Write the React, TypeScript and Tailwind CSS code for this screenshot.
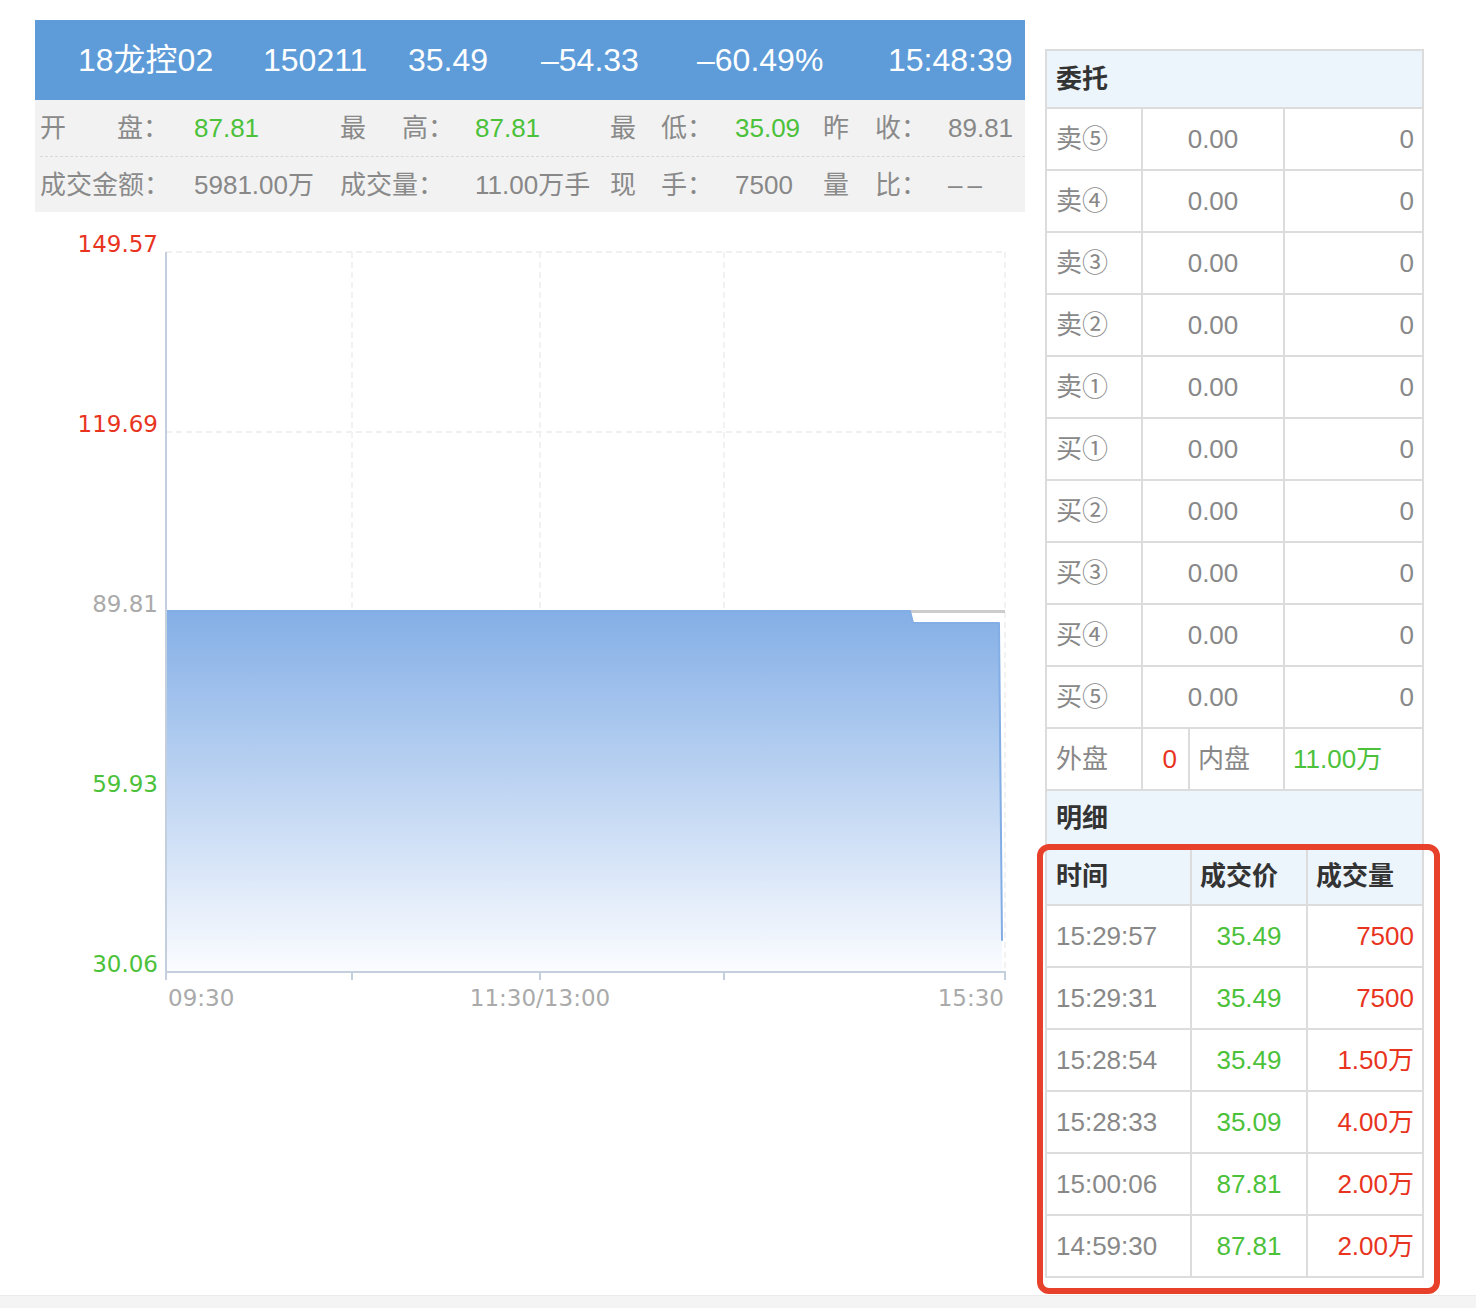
const head = [
  { text: '18龙控02', w: 'w-[185px]' },
  { text: '150211', w: 'w-[145px]' },
  { text: '35.49', w: 'w-[133px]' },
  { text: '–54.33', w: 'w-[156px]' },
  { text: '–60.49%', w: 'w-[191px]' },
  { text: '15:48:39', w: '' },
]

const book = [
  { name: '卖⑤', price: '0.00', vol: '0' },
  { name: '卖④', price: '0.00', vol: '0' },
  { name: '卖③', price: '0.00', vol: '0' },
  { name: '卖②', price: '0.00', vol: '0' },
  { name: '卖①', price: '0.00', vol: '0' },
  { name: '买①', price: '0.00', vol: '0' },
  { name: '买②', price: '0.00', vol: '0' },
  { name: '买③', price: '0.00', vol: '0' },
  { name: '买④', price: '0.00', vol: '0' },
  { name: '买⑤', price: '0.00', vol: '0' },
]

const trades = [
  { time: '15:29:57', price: '35.49', vol: '7500' },
  { time: '15:29:31', price: '35.49', vol: '7500' },
  { time: '15:28:54', price: '35.49', vol: '1.50万' },
  { time: '15:28:33', price: '35.09', vol: '4.00万' },
  { time: '15:00:06', price: '87.81', vol: '2.00万' },
  { time: '14:59:30', price: '87.81', vol: '2.00万' },
]

// two-part label spread across a fixed width, e.g. "开    盘："
function Label({ a, b, w }: { a: string; b: string; w: string }) {
  return (
    <div className={`${w} flex justify-between text-[#8a8a8a]`}>
      <span>{a}</span>
      <span>{b}</span>
    </div>
  )
}

function Chart() {
  const gridY = [252, 432, 612, 792]
  const gridX = [352, 540, 724, 1005]
  const ticks = [166, 352, 540, 724, 1005]
  const yLabels = [
    { y: 252, t: '149.57', c: '#e8341e' },
    { y: 432, t: '119.69', c: '#e8341e' },
    { y: 612, t: '89.81', c: '#aaaaaa' },
    { y: 792, t: '59.93', c: '#4cc13a' },
    { y: 972, t: '30.06', c: '#4cc13a' },
  ]
  return (
    <svg width={990} height={818} viewBox="35 212 990 818" className="block font-['DejaVu_Sans',sans-serif]">
      <defs>
        <linearGradient id="area" x1="0" y1="611" x2="0" y2="972" gradientUnits="userSpaceOnUse">
          <stop offset="0" stopColor="#84afe6" />
          <stop offset="1" stopColor="#fbfcff" />
        </linearGradient>
      </defs>
      {gridY.map((y) => (
        <line key={y} x1={166} x2={1005} y1={y} y2={y} stroke="#ececec" strokeWidth={1.5} strokeDasharray="6 4" />
      ))}
      {gridX.map((x) => (
        <line key={x} x1={x} x2={x} y1={252} y2={972} stroke="#eeeeee" strokeWidth={1.5} strokeDasharray="6 4" />
      ))}
      <line x1={166} x2={1005} y1={611.5} y2={611.5} stroke="#cccccc" strokeWidth={3} />
      <polygon points="167,611 910,611 913,623 999,623 1002,940 1002,972 167,972" fill="url(#area)" />
      <polyline
        points="167,611 910,611 913,623 999,623 1002,940"
        fill="none"
        stroke="#82ade5"
        strokeWidth={2}
        strokeLinecap="round"
        strokeLinejoin="round"
      />
      <line x1={166} x2={166} y1={252} y2={980} stroke="#c4cfdd" strokeWidth={2} />
      <line x1={166} x2={1006} y1={972} y2={972} stroke="#c4cfdd" strokeWidth={2} />
      {ticks.map((x) => (
        <line key={x} x1={x} x2={x} y1={972} y2={980} stroke="#c4cfdd" strokeWidth={2} />
      ))}
      {yLabels.map((l) => (
        <text key={l.t} x={158} y={l.y} textAnchor="end" fontSize={23} fill={l.c}>
          {l.t}
        </text>
      ))}
      <text x={168} y={1006} fontSize={23} fill="#aaaaaa">09:30</text>
      <text x={540} y={1006} fontSize={23} fill="#aaaaaa" textAnchor="middle">11:30/13:00</text>
      <text x={1004} y={1006} fontSize={23} fill="#aaaaaa" textAnchor="end">15:30</text>
    </svg>
  )
}

export default function App() {
  return (
    <div className="relative w-[1476px] h-[1308px] bg-white flex flex-col font-['Liberation_Sans','Noto_Sans_CJK_SC',sans-serif]">
      <div className="h-[1295px] flex gap-[20px] pl-[35px] pt-[20px]">
        {/* ── Left – quote + chart ─────────────────────── */}
        <div className="w-[990px]">
          <div className="h-[80px] bg-[#5d9bd9] flex items-center pl-[43px] text-white text-[32px]">
            {head.map((h) => (
              <span key={h.text} className={`${h.w} shrink-0`}>{h.text}</span>
            ))}
          </div>

          <div className="bg-[#f2f2f2] pl-[5px] text-[26px] text-[#888888]">
            <div className="h-[57px] pt-px flex items-center border-b border-dashed border-[#d9d9d9]">
              <div className="w-[154px]"><Label a="开" b="盘：" w="w-[129px]" /></div>
              <div className="w-[146px] text-[#4cc13a]">87.81</div>
              <div className="w-[135px]"><Label a="最" b="高：" w="w-[114px]" /></div>
              <div className="w-[135px] text-[#4cc13a]">87.81</div>
              <div className="w-[125px]"><Label a="最" b="低：" w="w-[103px]" /></div>
              <div className="w-[88px] text-[#4cc13a]">35.09</div>
              <div className="w-[125px]"><Label a="昨" b="收：" w="w-[104px]" /></div>
              <div>89.81</div>
            </div>
            <div className="h-[55px] pt-[2px] flex items-center">
              <div className="w-[154px] text-[#8a8a8a]">成交金额：</div>
              <div className="w-[146px]">5981.00万</div>
              <div className="w-[135px] text-[#8a8a8a]">成交量：</div>
              <div className="w-[135px]">11.00万手</div>
              <div className="w-[125px]"><Label a="现" b="手：" w="w-[103px]" /></div>
              <div className="w-[88px]">7500</div>
              <div className="w-[125px]"><Label a="量" b="比：" w="w-[104px]" /></div>
              <div className="tracking-[5px]">––</div>
            </div>
          </div>

          <Chart />
        </div>

        {/* ── Right – order book + trades ─────────────── */}
        <div className="w-[379px] mt-[29px] self-start border-2 border-b-0 border-[#dcdcdc] text-[26px] text-[#888888]">
          <div className="h-[58px] bg-[#ecf4fc] border-b-2 border-[#dcdcdc] flex items-center pl-[9px] font-bold text-[#333333]">
            委托
          </div>
          {book.map((r) => (
            <div key={r.name} className="h-[62px] flex border-b-2 border-[#dcdcdc]">
              <div className="w-[96px] border-r-2 border-[#dcdcdc] flex items-center pl-[9px]">{r.name}</div>
              <div className="w-[142px] border-r-2 border-[#dcdcdc] flex items-center justify-center">{r.price}</div>
              <div className="flex-1 flex items-center justify-end pr-[8px]">{r.vol}</div>
            </div>
          ))}
          <div className="h-[62px] flex border-b-2 border-[#dcdcdc]">
            <div className="w-[96px] border-r-2 border-[#dcdcdc] flex items-center pl-[9px]">外盘</div>
            <div className="w-[47px] border-r-2 border-[#dcdcdc] flex items-center justify-end pr-[11px] text-[#e8341e]">0</div>
            <div className="w-[95px] border-r-2 border-[#dcdcdc] flex items-center pl-[8px]">内盘</div>
            <div className="flex-1 flex items-center pl-[8px] text-[#4cc13a]">11.00万</div>
          </div>
          <div className="h-[57px] bg-[#ecf4fc] border-b-2 border-[#dcdcdc] flex items-center pl-[9px] font-bold text-[#333333]">
            明细
          </div>
          <div className="h-[58px] flex bg-[#ecf4fc] border-b-2 border-[#dcdcdc] font-bold text-[#333333]">
            <div className="w-[145px] border-r-2 border-[#dcdcdc] flex items-center pl-[9px]">时间</div>
            <div className="w-[116px] border-r-2 border-[#dcdcdc] flex items-center pl-[8px]">成交价</div>
            <div className="flex-1 flex items-center pl-[8px]">成交量</div>
          </div>
          {trades.map((t) => (
            <div key={t.time} className="h-[62px] flex border-b-2 border-[#dcdcdc]">
              <div className="w-[145px] border-r-2 border-[#dcdcdc] flex items-center pl-[9px]">{t.time}</div>
              <div className="w-[116px] border-r-2 border-[#dcdcdc] flex items-center justify-center text-[#4cc13a]">{t.price}</div>
              <div className="flex-1 flex items-center justify-end pr-[8px] text-[#e8341e]">{t.vol}</div>
            </div>
          ))}
        </div>
      </div>

      <div className="flex-1 bg-[#f4f4f4] border-t border-[#ececec]" />

      {/* annotation box */}
      <div className="absolute left-[1037px] top-[844px] w-[403px] h-[450px] border-[6px] border-[#e8412b] rounded-[12px] pointer-events-none" />
    </div>
  )
}
